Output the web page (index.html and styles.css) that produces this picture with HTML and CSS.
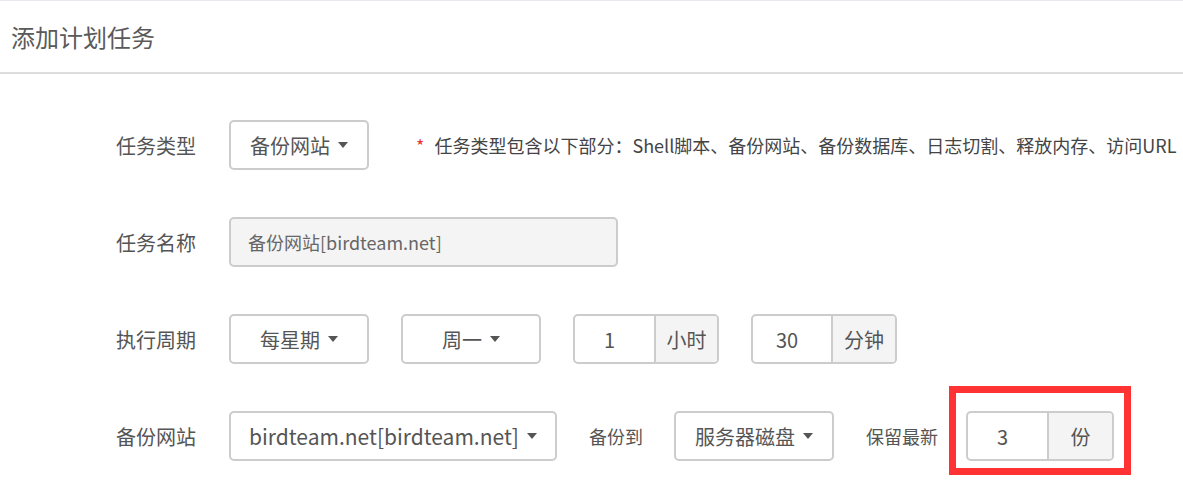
FILE: index.html
```html
<!DOCTYPE html>
<html lang="zh-CN">
<head>
<meta charset="utf-8">
<title>添加计划任务</title>
<link rel="stylesheet" href="styles.css">
</head>
<body>
<div class="page">
  <div class="header">添加计划任务</div>
  <div class="form">
    <div class="row">
      <div class="label">任务类型</div>
      <div class="select w140">备份网站<span class="caret"></span></div>
      <div class="hint"><span class="star">*</span>任务类型包含以下部分：Shell脚本、备份网站、备份数据库、日志切割、释放内存、访问URL</div>
    </div>
    <div class="row">
      <div class="label">任务名称</div>
      <div class="input disabled">备份网站[birdteam.net]</div>
    </div>
    <div class="row">
      <div class="label">执行周期</div>
      <div class="select w140">每星期<span class="caret"></span></div>
      <div class="select w140 gap">周一<span class="caret"></span></div>
      <div class="group gap"><span class="gi w81">1</span><span class="addon w65">小时</span></div>
      <div class="group gap"><span class="gi w80">30</span><span class="addon w66">分钟</span></div>
    </div>
    <div class="row">
      <div class="label">备份网站</div>
      <div class="select w328 latin">birdteam.net[birdteam.net]<span class="caret"></span></div>
      <div class="text gap">备份到</div>
      <div class="select w160 gap31">服务器磁盘<span class="caret"></span></div>
      <div class="text gap">保留最新</div>
      <div class="group marked gap28"><span class="gi w81">3</span><span class="addon w67">份</span></div>
    </div>
  </div>
</div>
</body>
</html>
```

FILE: styles.css
```css
html, body {
  margin: 0;
  padding: 0;
  background: #fff;
}
body {
  font-family: "Noto Sans CJK SC", "Microsoft YaHei", sans-serif;
  color: #555;
}
.page {
  height: 482px;
  box-sizing: border-box;
  overflow: hidden;
  border-top: 1px solid #e6e9ed;
}
.header {
  height: 73px;
  display: flex;
  align-items: center;
  padding-left: 11px;
  font-size: 24px;
  color: #5a5a5a;
  border-bottom: 2px solid #ddd;
  box-sizing: border-box;
}
.form {
  padding: 46px 0 0 116px;
}
.row {
  display: flex;
  align-items: center;
  height: 50px;
  margin-bottom: 47px;
}
.label {
  width: 113px;
  flex: none;
  font-size: 20px;
  color: #555;
}
.select {
  height: 50px;
  box-sizing: border-box;
  border: 2px solid #ccc;
  border-radius: 5px;
  display: flex;
  align-items: center;
  justify-content: center;
  font-size: 20px;
  color: #555;
  flex: none;
  background: #fff;
}
.select.latin {
  font-size: 21px;
}
.caret {
  width: 0;
  height: 0;
  border-left: 5px solid transparent;
  border-right: 5px solid transparent;
  border-top: 6px solid #555;
  margin-left: 8px;
}
.w140 { width: 140px; }
.w328 { width: 328px; }
.w160 { width: 160px; }
.gap { margin-left: 32px; }
.gap31 { margin-left: 31px; }
.gap28 { margin-left: 28px; }
.hint {
  margin-left: 47px;
  font-size: 18px;
  color: #444;
  white-space: nowrap;
}
.star {
  color: #e53935;
  margin-right: 10px;
}
.input {
  width: 389px;
  height: 50px;
  box-sizing: border-box;
  border: 2px solid #ccc;
  border-radius: 5px;
  display: flex;
  align-items: center;
  padding-left: 17px;
  font-size: 18px;
  color: #666;
}
.input.disabled {
  background: #f4f4f4;
}
.group {
  display: flex;
  height: 50px;
  box-sizing: border-box;
  border: 2px solid #ccc;
  border-radius: 5px;
  font-size: 20px;
  color: #555;
  flex: none;
}
.gi, .addon {
  display: flex;
  align-items: center;
  justify-content: center;
  box-sizing: border-box;
}
.gi {
  padding-right: 10px;
}
.addon {
  background: #f4f4f4;
  border-left: 2px solid #ccc;
  border-radius: 0 3px 3px 0;
}
.w81 { width: 79px; }
.w80 { width: 78px; }
.w65 { width: 63px; }
.w66 { width: 64px; }
.w67 { width: 65px; }
.text {
  font-size: 18px;
  color: #555;
  flex: none;
}
.marked {
  position: relative;
}
.marked::after {
  content: "";
  position: absolute;
  left: -19px;
  right: -19px;
  top: -27px;
  bottom: -16px;
  border: 7px solid #f33;
}
```
